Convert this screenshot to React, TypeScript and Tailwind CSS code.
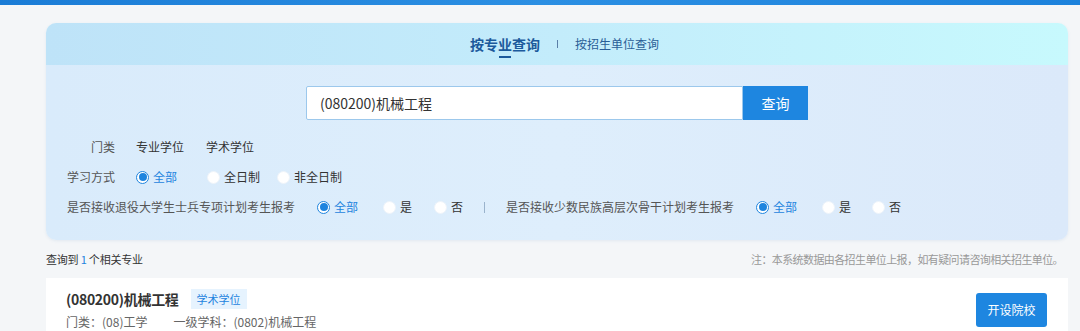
import React from "react";

type Opt = { label: string; checked?: boolean; w: string };

const Radio = ({ label, checked, w }: Opt) => (
  <div className={`flex items-center ${w}`}>
    {checked ? (
      <span className="flex h-[13px] w-[13px] items-center justify-center rounded-full border border-[#1e84de] bg-white">
        <span className="h-[8px] w-[8px] rounded-full bg-[#1e84de]" />
      </span>
    ) : (
      <span className="h-[13px] w-[13px] rounded-full border border-[#eef4fa] bg-white" />
    )}
    <span className={`ml-[4px] ${checked ? "text-[#1e84de]" : "text-[#333]"}`}>{label}</span>
  </div>
);

export default function App() {
  return (
    <div
      className="h-[331px] w-[1080px] overflow-hidden bg-[#f4f6f8] text-[12px]"
      style={{ fontFamily: '"Noto Sans CJK SC", "Liberation Sans", sans-serif' }}
    >
      <div className="h-[5px] bg-gradient-to-r from-[#1a7cd6] via-[#2b8fe3] to-[#1c82dc]" />

      <div className="ml-[46px] mt-[18px] w-[1022px]">
        {/* 查询面板 */}
        <div className="overflow-hidden rounded-[10px] shadow-[0_1px_3px_rgba(120,160,200,0.15)]">
          <div className="relative flex h-[42px] items-center justify-center bg-gradient-to-r from-[#bee3f8] via-[#c3ecfb] to-[#c7f9fd] pl-[15px]">
            <div className="relative">
              <span className="text-[14px] font-bold leading-[20px] text-[#1c5a9c]">按专业查询</span>
              <span className="absolute left-1/2 top-full mt-[2px] h-[2px] w-[12px] -translate-x-1/2 bg-[#1c5a9c]" />
            </div>
            <span className="mx-[17px] h-[8px] w-px bg-[#5a7fa8]" />
            <span className="text-[12px] leading-[20px] text-[#2a5e97]">按招生单位查询</span>
          </div>

          <div className="bg-gradient-to-r from-[#d9ebfb] via-[#deeefc] to-[#dbe9fa] pb-[18px] pt-[21px]">
            <div className="flex justify-center">
              <div className="flex h-[34px] w-[437px] items-center rounded-l-[2px] border border-[#9cc8ec] bg-white pl-[13px] text-[14px] text-[#333]">
                (080200)机械工程
              </div>
              <div className="flex h-[34px] w-[65px] items-center justify-center bg-[#1e86e0] text-[14px] text-white">
                查询
              </div>
            </div>

            <div className="mt-[12px] pl-[21px]">
              <div className="flex h-[30px] items-center">
                <span className="w-[48px] text-right text-[#555]">门类</span>
                <span className="ml-[21px] text-[#333]">专业学位</span>
                <span className="ml-[22px] text-[#333]">学术学位</span>
              </div>
              <div className="flex h-[30px] items-center">
                <span className="w-[48px] text-[#555]">学习方式</span>
                <div className="ml-[21px] flex items-center">
                  <Radio label="全部" checked w="w-[71px]" />
                  <Radio label="全日制" w="w-[70px]" />
                  <Radio label="非全日制" w="w-[70px]" />
                </div>
              </div>
              <div className="flex h-[30px] items-center">
                <span className="text-[#555]">是否接收退役大学生士兵专项计划考生报考</span>
                <div className="ml-[22px] flex items-center">
                  <Radio label="全部" checked w="w-[66px]" />
                  <Radio label="是" w="w-[51px]" />
                  <Radio label="否" w="w-[30px]" />
                </div>
                <span className="ml-[20px] h-[11px] w-px bg-[#9ab3cc]" />
                <span className="ml-[21px] text-[#555]">是否接收少数民族高层次骨干计划考生报考</span>
                <div className="ml-[22px] flex items-center">
                  <Radio label="全部" checked w="w-[66px]" />
                  <Radio label="是" w="w-[50px]" />
                  <Radio label="否" w="w-[30px]" />
                </div>
              </div>
            </div>
          </div>
        </div>

        {/* 结果统计 */}
        <div className="flex h-[38px] items-center justify-between pr-[5px] text-[11px]">
          <span className="tracking-[-0.2px] text-[#333]">
            查询到 <span className="text-[#1e84de]">1</span> 个相关专业
          </span>
          <span className="tracking-[-0.6px] text-[#999]">注：本系统数据由各招生单位上报，如有疑问请咨询相关招生单位。</span>
        </div>

        {/* 结果卡片 */}
        <div className="flex h-[70px] items-start justify-between bg-white pl-[20px] pr-[21px] pt-[11px]">
          <div>
            <div className="flex items-center">
              <span className="text-[14px] font-bold leading-[20px] tracking-[-0.3px] text-[#333]">(080200)机械工程</span>
              <span className="ml-[12px] flex h-[20px] items-center bg-[#e6f3fe] px-[6px] text-[11px] text-[#1e84de]">
                学术学位
              </span>
            </div>
            <div className="mt-[5px] flex text-[12px] leading-[16px] text-[#666]">
              <span>门类：(08)工学</span>
              <span className="ml-[26px]">一级学科：(0802)机械工程</span>
            </div>
          </div>
          <div className="mt-[4px] flex h-[34px] w-[71px] items-center justify-center rounded-[3px] bg-[#1e86e0] text-[12px] text-white">
            开设院校
          </div>
        </div>
      </div>
    </div>
  );
}
